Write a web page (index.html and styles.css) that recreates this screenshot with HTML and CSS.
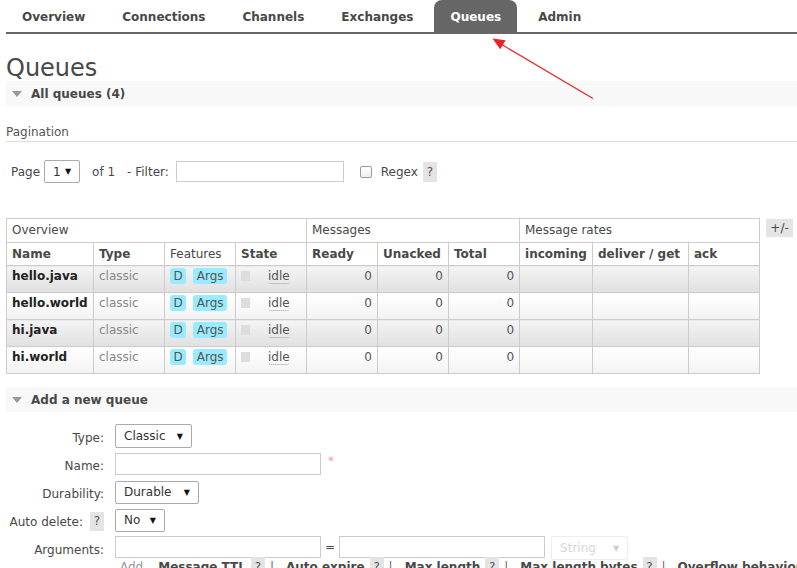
FILE: index.html
```html
<!DOCTYPE html>
<html>
<head>
<meta charset="utf-8">
<title>Queues</title>
<link rel="stylesheet" href="styles.css">
</head>
<body>
<div class="page">
  <ul class="tabs">
    <li class="tab">Overview</li>
    <li class="tab">Connections</li>
    <li class="tab">Channels</li>
    <li class="tab">Exchanges</li>
    <li class="tab active">Queues</li>
    <li class="tab">Admin</li>
  </ul>

  <h1 class="title">Queues</h1>

  <div class="section-bar"><span class="tri"></span>All queues (4)</div>

  <h3 class="sub">Pagination</h3>

  <div class="pager">
    <span class="pager-label">Page</span>
    <div class="select sel-page"><span>1</span><span class="caret">▼</span></div>
    <span class="of">of 1</span>
    <span class="filter-label">- Filter:</span>
    <div class="input inp-filter"></div>
    <span class="checkbox"></span>
    <span class="regex">Regex</span>
    <span class="help">?</span>
  </div>

  <div class="table-wrap">
    <table class="list">
      <colgroup>
        <col class="c-name"><col class="c-type"><col class="c-feat"><col class="c-state">
        <col class="c-num"><col class="c-num"><col class="c-num">
        <col class="c-in"><col class="c-del"><col class="c-ack">
      </colgroup>
      <thead>
        <tr class="group">
          <th colspan="4">Overview</th>
          <th colspan="3">Messages</th>
          <th colspan="3">Message rates</th>
        </tr>
        <tr class="heads">
          <th>Name</th><th>Type</th><th class="plain">Features</th><th>State</th>
          <th>Ready</th><th>Unacked</th><th>Total</th>
          <th>incoming</th><th>deliver / get</th><th>ack</th>
        </tr>
      </thead>
      <tbody>
        <tr class="alt1">
          <td class="name">hello.java</td><td class="type">classic</td>
          <td><span class="badges"><span class="badge">D</span><span class="badge">Args</span></span></td>
          <td><span class="state"><span class="sq"></span><span class="idle">idle</span></span></td>
          <td class="num">0</td><td class="num">0</td><td class="num">0</td>
          <td></td><td></td><td></td>
        </tr>
        <tr class="alt0">
          <td class="name">hello.world</td><td class="type">classic</td>
          <td><span class="badges"><span class="badge">D</span><span class="badge">Args</span></span></td>
          <td><span class="state"><span class="sq"></span><span class="idle">idle</span></span></td>
          <td class="num">0</td><td class="num">0</td><td class="num">0</td>
          <td></td><td></td><td></td>
        </tr>
        <tr class="alt1">
          <td class="name">hi.java</td><td class="type">classic</td>
          <td><span class="badges"><span class="badge">D</span><span class="badge">Args</span></span></td>
          <td><span class="state"><span class="sq"></span><span class="idle">idle</span></span></td>
          <td class="num">0</td><td class="num">0</td><td class="num">0</td>
          <td></td><td></td><td></td>
        </tr>
        <tr class="alt0">
          <td class="name">hi.world</td><td class="type">classic</td>
          <td><span class="badges"><span class="badge">D</span><span class="badge">Args</span></span></td>
          <td><span class="state"><span class="sq"></span><span class="idle">idle</span></span></td>
          <td class="num">0</td><td class="num">0</td><td class="num">0</td>
          <td></td><td></td><td></td>
        </tr>
      </tbody>
    </table>
    <div class="toggle">+/-</div>
  </div>

  <div class="section-bar second"><span class="tri"></span>Add a new queue</div>

  <div class="form">
    <label class="lbl">Type:</label>
    <div class="ctl"><div class="select sel-type"><span>Classic</span><span class="caret">▼</span></div></div>

    <label class="lbl">Name:</label>
    <div class="ctl"><div class="input inp-wide"></div><span class="req">*</span></div>

    <label class="lbl">Durability:</label>
    <div class="ctl"><div class="select sel-dur"><span>Durable</span><span class="caret">▼</span></div></div>

    <label class="lbl">Auto delete: <span class="help">?</span></label>
    <div class="ctl"><div class="select sel-auto"><span>No</span><span class="caret">▼</span></div></div>

    <label class="lbl">Arguments:</label>
    <div class="ctl ctl-args">
      <div class="input inp-wide"></div>
      <span class="eq">=</span>
      <div class="input inp-wide"></div>
      <div class="select sel-string faded"><span>String</span><span class="caret">▼</span></div>
    </div>

    <span class="lbl"></span>
    <div class="arg-links">
      <span class="add">Add</span>
      <span class="link">Message TTL</span><span class="help">?</span><span class="sep">|</span>
      <span class="link">Auto expire</span><span class="help">?</span><span class="sep">|</span>
      <span class="link">Max length</span><span class="help">?</span><span class="sep">|</span>
      <span class="link">Max length bytes</span><span class="help">?</span><span class="sep">|</span>
      <span class="link">Overflow behaviour</span><span class="help">?</span>
    </div>
  </div>
</div>

<svg class="arrow" width="797" height="120" viewBox="0 0 797 120" xmlns="http://www.w3.org/2000/svg">
  <line x1="593" y1="98.5" x2="500" y2="43.5" stroke="#ee2222" stroke-width="1.2"/>
  <polygon points="492.5,38.5 500.2,49.2 505.6,40.3" fill="#ee2222"/>
</svg>
</body>
</html>
```

FILE: styles.css
```css
html {
  overflow: hidden;
}

body {
  margin: 0;
  font-family: "DejaVu Sans", Verdana, sans-serif;
  font-size: 12px;
  color: #484848;
  background: #fff;
}

.page {
  padding-left: 6px;
}

/* ---- tabs ---- */
.tabs {
  list-style: none;
  margin: 0;
  padding: 0;
  display: flex;
  height: 32px;
  border-bottom: 2px solid #666;
}

.tab {
  padding: 2px 16px 0;
  margin-right: 5px;
  line-height: 30px;
  font-weight: bold;
  color: #484848;
}

.tab.active {
  background: #666;
  color: #fff;
  border-radius: 8px 8px 0 0;
}

/* ---- headings ---- */
.title {
  margin: 22px 0 0;
  font-size: 24px;
  line-height: 25px;
  font-weight: normal;
  color: #484848;
}

.section-bar {
  display: flex;
  align-items: center;
  height: 25px;
  background: #f8f8f8;
  font-weight: bold;
  color: #484848;
  padding-left: 6px;
}

.section-bar.second {
  margin-top: 13px;
}

.tri {
  width: 0;
  height: 0;
  border-left: 5px solid transparent;
  border-right: 5px solid transparent;
  border-top: 6px solid #999;
  margin-right: 9px;
  margin-top: 1px;
}

.sub {
  margin: 18px 0 0;
  font-size: 12px;
  line-height: 16px;
  font-weight: normal;
  color: #555;
  padding-bottom: 1px;
  border-bottom: 1px solid #ddd;
}

/* ---- pager ---- */
.pager {
  display: flex;
  align-items: center;
  height: 23px;
  margin-top: 18px;
  padding-left: 5px;
}

.pager-label {
  margin-right: 4px;
}

.of {
  margin-left: 12px;
}

.filter-label {
  margin-left: 12px;
  margin-right: 7px;
}

.select {
  box-sizing: border-box;
  display: flex;
  align-items: center;
  justify-content: space-between;
  border: 1px solid #aaa;
  border-radius: 2px;
  background: #fff;
  padding: 0 8px 0 8px;
  color: #333;
  font-size: 12px;
}

.caret {
  font-size: 8px;
  color: #111;
}

.sel-page {
  width: 36px;
  height: 23px;
}

.input {
  box-sizing: border-box;
  border: 1px solid #ccc;
  background: #fff;
}

.inp-filter {
  width: 168px;
  height: 21px;
}

.checkbox {
  box-sizing: border-box;
  width: 12px;
  height: 12px;
  border: 1px solid #999;
  border-radius: 2px;
  margin-left: 16px;
  background: linear-gradient(#fff, #eee);
}

.regex {
  margin-left: 9px;
  margin-right: 5px;
}

.help {
  display: inline-block;
  width: 14px;
  height: 20px;
  line-height: 20px;
  text-align: center;
  background: #e4e4e4;
  color: #555;
  font-weight: normal;
}

/* ---- table ---- */
.table-wrap {
  display: flex;
  align-items: flex-start;
  margin-top: 35px;
}

.list {
  border-collapse: collapse;
  table-layout: fixed;
  width: 753px;
}

.c-name { width: 87px; }
.c-type { width: 71px; }
.c-feat { width: 71px; }
.c-state { width: 71px; }
.c-num { width: 71px; }
.c-in { width: 73px; }
.c-del { width: 96px; }
.c-ack { width: 71px; }

.list th,
.list td {
  border: 1px solid #ccc;
  text-align: left;
  line-height: 16px;
  white-space: nowrap;
  overflow: hidden;
  vertical-align: top;
}

.group th {
  font-weight: normal;
  padding: 3px 5px 4px;
}

.heads th {
  font-weight: bold;
  padding: 3px 5px 3px;
}

.heads th.plain {
  font-weight: normal;
}

.list td {
  padding: 2px 5px 8px;
  height: 16px;
}

.alt1 td {
  background: linear-gradient(#f4f4f4, #e0e0e0);
}

.alt0 td {
  background: linear-gradient(#ffffff, #f3f3f3);
}

.name {
  font-weight: bold;
  color: #222;
}

.type {
  color: #888;
}

.num {
  text-align: right !important;
  color: #555;
}

.badges {
  display: flex;
  gap: 7px;
  height: 16px;
}

.badge {
  display: inline-block;
  background: #99ebff;
  border-radius: 3px;
  padding: 0 3.5px;
  line-height: 16px;
  height: 16px;
  color: #555;
}

.state {
  display: flex;
  align-items: flex-start;
  height: 16px;
}

.sq {
  width: 9px;
  height: 10px;
  background: #ddd;
  margin-top: 3px;
  margin-right: 18px;
}

.idle {
  line-height: 14px;
  margin-top: 1px;
  border-bottom: 1px dotted #999;
  border-radius: 0 0 3px 3px;
  color: #555;
}

.toggle {
  margin-left: 6px;
  margin-top: 1px;
  width: 27px;
  height: 18px;
  line-height: 18px;
  text-align: center;
  background: #e4e4e4;
  color: #484848;
}

/* ---- form ---- */
.form {
  display: grid;
  grid-template-columns: 98px 1fr;
  column-gap: 11px;
  row-gap: 4px;
  grid-auto-rows: 24px;
  margin-top: 12px;
}

.lbl {
  text-align: right;
  display: flex;
  align-items: center;
  justify-content: flex-end;
  padding-top: 4px;
  box-sizing: border-box;
}

.lbl .help {
  margin-left: 7px;
  height: 19px;
  line-height: 19px;
  margin-top: -2px;
}

.ctl {
  display: flex;
  align-items: center;
}

.ctl-args {
  align-items: flex-start;
}

.sel-type {
  width: 77px;
  height: 24px;
}

.sel-dur {
  width: 84px;
  height: 23px;
}

.sel-auto {
  width: 50px;
  height: 23px;
}

.inp-wide {
  width: 206px;
  height: 22px;
}

.req {
  color: #f99;
  margin-left: 7px;
  margin-top: -6px;
  font-size: 12px;
}

.eq {
  margin: 0 4px;
  line-height: 22px;
}

.sel-string {
  width: 77px;
  height: 24px;
  margin-left: 6px;
}

.faded {
  opacity: 0.2;
}

.arg-links {
  display: flex;
  align-items: flex-start;
  white-space: nowrap;
  line-height: 16px;
  margin-top: -5px;
}

.add {
  color: #999;
  margin-left: 5px;
  margin-right: 15px;
}

.link {
  font-weight: bold;
  color: #484848;
}

.arg-links .help {
  margin-left: 5px;
  margin-top: -2px;
  height: 20px;
}

.sep {
  margin: 0 12px 0 5px;
  color: #666;
}

/* ---- annotation ---- */
.arrow {
  position: absolute;
  left: 0;
  top: 0;
  pointer-events: none;
}
```
